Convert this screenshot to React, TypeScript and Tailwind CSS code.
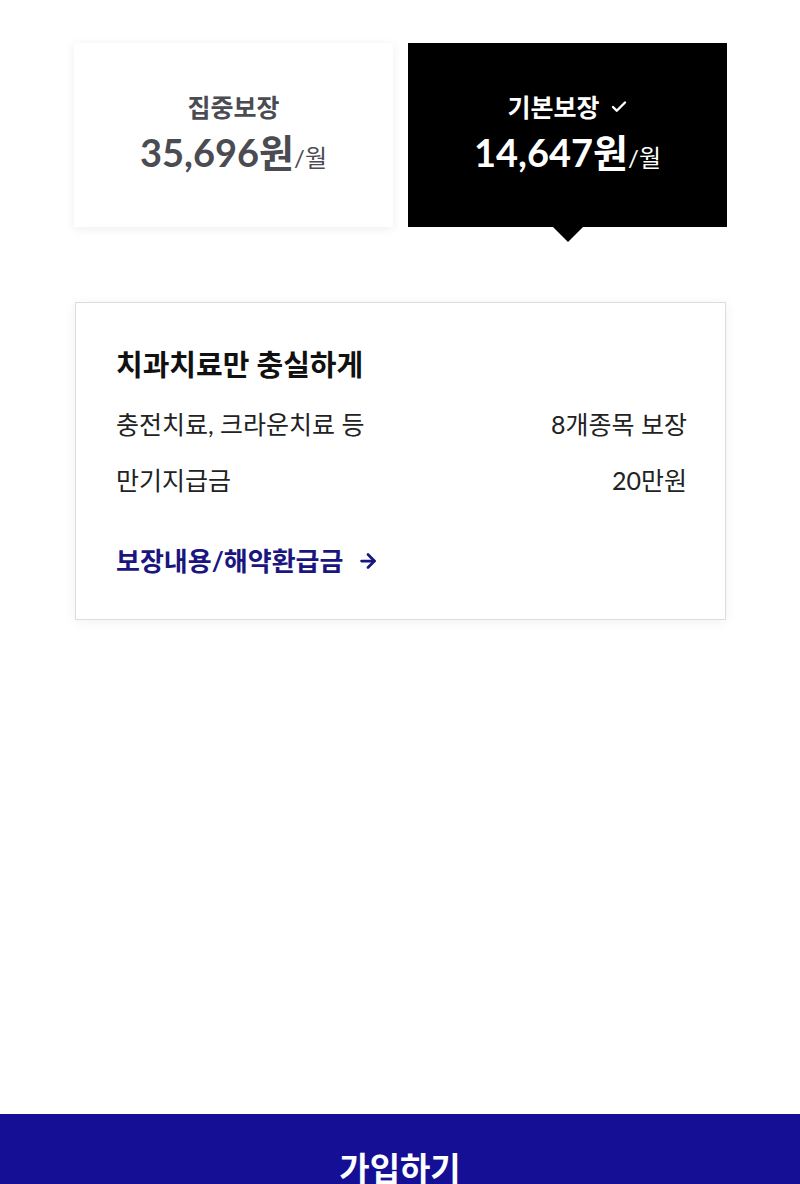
import { ArrowRight, Check } from 'lucide-react';

type Plan = {
    name: string;
    price: string;
    selected: boolean;
};

const plans: Plan[] = [
    { name: '집중보장', price: '35,696', selected: false },
    { name: '기본보장', price: '14,647', selected: true },
];

const rows = [
    { label: '충전치료, 크라운치료 등', value: '8개종목 보장' },
    { label: '만기지급금', value: '20만원' },
];

const font = "font-['Lato','Noto_Sans_CJK_KR',sans-serif]";

export default function App() {
    return (
        <div className={`relative h-[1184px] overflow-hidden bg-white ${font}`}>
            <div className="flex gap-[15px] pl-[74px] pt-[43px]">
                {plans.map((plan) => (
                    <div
                        key={plan.name}
                        className={
                            plan.selected
                                ? 'relative flex h-[184px] w-[319px] flex-col items-center bg-black pt-[48px] text-white'
                                : 'relative flex h-[184px] w-[319px] flex-col items-center bg-white pt-[48px] text-[#4b4b52] shadow-[0_2px_10px_rgba(0,0,0,0.07)]'
                        }
                    >
                        <div className="flex items-center gap-[10px] text-[25px] leading-[32px] font-bold">
                            {plan.name}
                            {plan.selected ? <Check className="h-[18px] w-[18px]" strokeWidth={3.2} /> : null}
                        </div>
                        <div className="mt-[6px] flex items-baseline">
                            <span className="text-[38px] leading-[46px] font-bold">{plan.price}원</span>
                            <span className="text-[24px] font-normal">/월</span>
                        </div>
                        {plan.selected ? (
                            <div className="absolute top-full left-1/2 h-0 w-0 -translate-x-1/2 border-x-[15px] border-t-[15px] border-x-transparent border-t-black" />
                        ) : null}
                    </div>
                ))}
            </div>

            <div className="mt-[75px] mr-[74px] ml-[75px] h-[318px] border border-[#dcdcdc] bg-white pt-[44px] pr-[38px] pl-[40px] shadow-[0_2px_12px_rgba(0,0,0,0.06)]">
                <div className="text-[29px] leading-[36px] font-bold text-[#111]">치과치료만 충실하게</div>
                <div className="mt-[23px] space-y-[20px]">
                    {rows.map((row) => (
                        <div key={row.label} className="flex items-center justify-between text-[25px] leading-[36px] text-[#222]">
                            <span>{row.label}</span>
                            <span>{row.value}</span>
                        </div>
                    ))}
                </div>
                <a href="#" className="mt-[45px] flex items-center gap-[14px] text-[26px] leading-[36px] font-bold text-[#1b1580]">
                    보장내용/해약환급금
                    <ArrowRight className="h-[22px] w-[22px]" strokeWidth={3} />
                </a>
            </div>

            <button className="absolute top-[1114px] left-0 flex h-[120px] w-full justify-center bg-[#140f94] pt-[32px] text-[33px] leading-[44px] font-bold text-white">
                가입하기
            </button>
        </div>
    );
}
